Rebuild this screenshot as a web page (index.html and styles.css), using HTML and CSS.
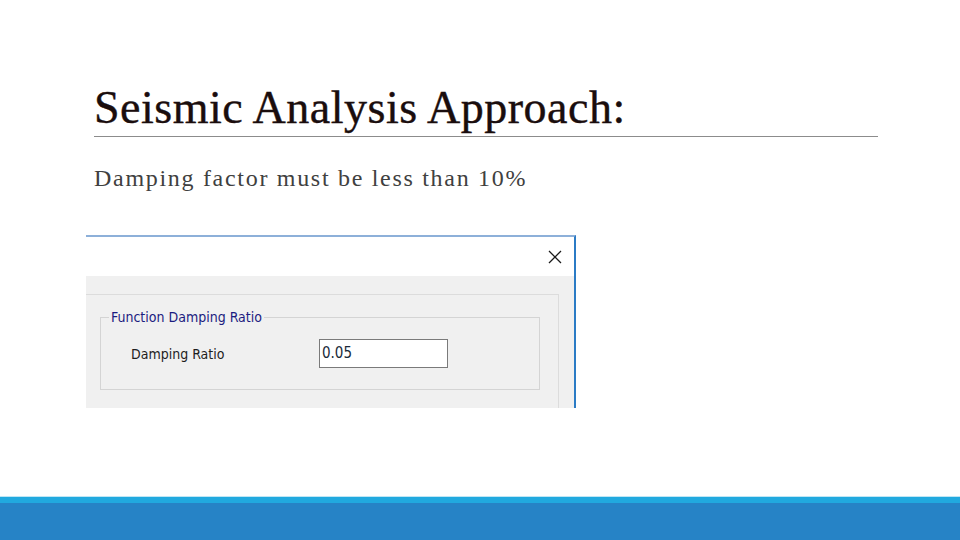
FILE: index.html
```html
<!DOCTYPE html>
<html>
<head>
<meta charset="utf-8">
<link rel="stylesheet" href="styles.css">
</head>
<body>
<div class="slide">
  <div class="main">
    <h1 class="title">Seismic Analysis Approach:</h1>
    <p class="bullet">Damping factor must be less than 10%</p>
    <div class="dialog">
      <div class="titlebar">
        <svg class="close" width="16" height="16" viewBox="0 0 16 16"><path d="M2 2 L14 14 M14 2 L2 14" stroke="#1a1a1a" stroke-width="1.3" fill="none"/></svg>
      </div>
      <div class="dialog-body">
        <div class="outer-panel">
          <fieldset class="group">
            <legend class="legend">Function Damping Ratio</legend>
            <div class="row">
              <span class="label">Damping Ratio</span>
              <span class="input">0.05</span>
            </div>
          </fieldset>
        </div>
      </div>
    </div>
  </div>
  <div class="footer">
    <div class="footer-light"></div>
    <div class="footer-dark"></div>
  </div>
</div>
</body>
</html>
```
FILE: styles.css
```css
html, body { margin: 0; padding: 0; background: #fff; }
.slide { width: 960px; height: 540px; display: flex; flex-direction: column; overflow: hidden; }
.main { flex: 1; padding: 0 82px 0 94px; }
.title {
  margin: 82px 0 0 0;
  font-family: "Liberation Serif", serif;
  font-weight: normal;
  font-size: 46px;
  letter-spacing: 0.5px;
  line-height: 52px;
  color: #1a0d0d;
  -webkit-text-stroke: 0.4px #1a0d0d;
  padding-bottom: 2px;
  border-bottom: 1px solid #8c8c8c;
}
.bullet {
  margin: 28px 0 0 0;
  font-family: "Liberation Serif", serif;
  font-size: 24px;
  letter-spacing: 1.7px;
  line-height: 27px;
  color: #404040;
}
.dialog {
  margin: 43px 0 0 -8px;
  width: 488px;
  height: 171px;
  border-top: 2px solid #8db0d9;
  border-right: 2px solid #2b7bc5;
  display: flex;
  flex-direction: column;
}
.titlebar { height: 39px; background: #fff; display: flex; justify-content: flex-end; align-items: center; padding-right: 11px; }
.close { display: block; }
.dialog-body { flex: 1; background: #f0f0f0; padding-top: 18px; }
.outer-panel {
  width: 473px;
  height: 114px;
  border-top: 1px solid #dcdcdc;
  border-right: 1px solid #dcdcdc;
  padding: 14px 0 0 14px;
  box-sizing: border-box;
}
.group {
  margin: 0;
  width: 440px;
  height: 81px;
  box-sizing: border-box;
  border: 1px solid #d4d4d4;
  padding: 0 0 0 30px;
}
.legend {
  font-family: "DejaVu Sans Condensed", sans-serif;
  font-size: 14px;
  color: #1c1c80;
  padding: 0 2px;
  margin-left: -22px;
}
.row { display: flex; align-items: center; margin-top: 14px; }
.label {
  width: 188px;
  font-family: "DejaVu Sans Condensed", sans-serif;
  font-size: 14px;
  color: #1e1e1e;
}
.input {
  width: 129px;
  height: 29px;
  box-sizing: border-box;
  background: #fff;
  border: 1px solid #7a7a7a;
  font-family: "DejaVu Sans Condensed", sans-serif;
  font-size: 15px;
  color: #1a2a3a;
  padding: 4px 0 0 2px;
}
.footer { height: 44px; display: flex; flex-direction: column; }
.footer-light { height: 6px; background: #21a9df; border-top: 1px solid #bfe6f5; }
.footer-dark { flex: 1; background: #2683c6; }
```
